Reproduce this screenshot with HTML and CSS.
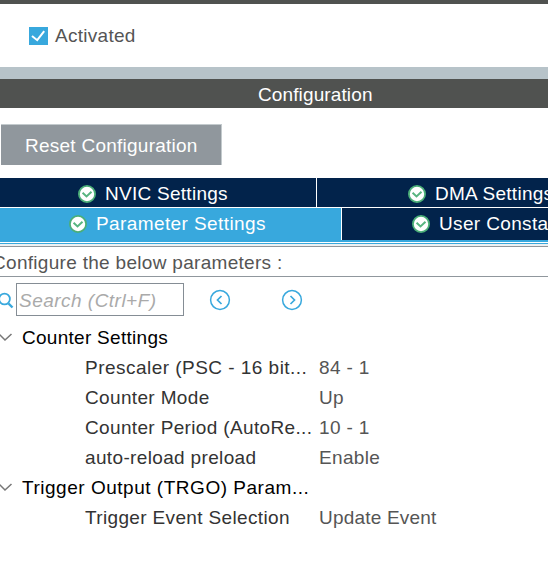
FILE: index.html
```html
<!DOCTYPE html>
<html lang="en">
<head>
<meta charset="utf-8">
<title>Timer configuration</title>
<link rel="stylesheet" href="styles.css">
</head>
<body>
<svg width="0" height="0" class="defs">
  <symbol id="ok" viewBox="0 0 18 18">
    <circle cx="9" cy="9" r="8.1" fill="#fff" stroke="#4bae78" stroke-width="1.8"/>
    <path d="M4.6 7.8l3.9 3.6 5-4.600" fill="none" stroke="#58b580" stroke-width="2"/>
  </symbol>
</svg>
<section class="mode">
  <label class="check">
    <svg width="19" height="18" viewBox="0 0 19 18"><path fill="#38a8dd" d="M0 0h19v18H0z"/><path d="M3 9l5.200 4.200 7-9" fill="none" stroke="#fff" stroke-width="2"/></svg>
    <span>Activated</span>
  </label>
</section>
<div class="sash"></div>
<h1 class="title">Configuration</h1>
<div class="actions"><button class="reset">Reset Configuration</button></div>
<nav class="tabs">
  <div class="tabrow first">
    <div class="tab nvic"><svg class="ok"><use href="#ok"/></svg><span>NVIC Settings</span></div>
    <div class="tab dma"><svg class="ok"><use href="#ok"/></svg><span>DMA Settings</span></div>
  </div>
  <div class="tabrow second">
    <div class="tab param"><svg class="ok"><use href="#ok"/></svg><span>Parameter Settings</span></div>
    <div class="tab user"><svg class="ok"><use href="#ok"/></svg><span>User Constants</span></div>
  </div>
</nav>
<div class="edge"></div>
<p class="hint">Configure the below parameters :</p>
<div class="search">
  <svg class="lens" width="16" height="20" viewBox="0 0 16 20"><circle cx="4.500" cy="9" r="5.400" fill="none" stroke="#38a8dd" stroke-width="1.8"/><path d="M8.500 13.500l4 4" stroke="#38a8dd" stroke-width="2.4"/></svg>
  <div class="field">Search (Ctrl+F)</div>
  <svg class="prev" width="22" height="22" viewBox="0 0 22 22" fill="none" stroke="#38a8dd"><circle cx="11" cy="11" r="9.400" stroke-width="1.5"/><path d="M12.500 7l-4 4 4 4" stroke-width="1.7"/></svg>
  <svg class="next" width="22" height="22" viewBox="0 0 22 22" fill="none" stroke="#38a8dd"><circle cx="11" cy="11" r="9.400" stroke-width="1.5"/><path d="M9.500 7l4 4-4 4" stroke-width="1.7"/></svg>
</div>
<div class="tree">
  <div class="group"><svg width="22" height="10" viewBox="0 0 22 10"><path d="M-1 1l6 6 6.500-6" fill="none" stroke="#777" stroke-width="1.5"/></svg><span class="t1">Counter Settings</span></div>
  <div class="row"><span class="key k1">Prescaler (PSC - 16 bit...</span><span class="val">84 - 1</span></div>
  <div class="row"><span class="key">Counter Mode</span><span class="val">Up</span></div>
  <div class="row"><span class="key">Counter Period (AutoRe...</span><span class="val">10 - 1</span></div>
  <div class="row"><span class="key">auto-reload preload</span><span class="val">Enable</span></div>
  <div class="group"><svg width="22" height="10" viewBox="0 0 22 10"><path d="M-1 1l6 6 6.500-6" fill="none" stroke="#777" stroke-width="1.5"/></svg><span class="t2">Trigger Output (TRGO) Param...</span></div>
  <div class="row"><span class="key">Trigger Event Selection</span><span class="val v5">Update Event</span></div>
</div>
</body>
</html>
```
FILE: styles.css
```css
* { box-sizing: border-box; }
body {
  margin: 0;
  height: 574px;
  overflow: hidden;
  background: #fff;
  color: #555;
  font: 19px/30px "Liberation Sans", Arial, sans-serif;
  letter-spacing: .35px;
  white-space: nowrap;
}
svg { display: block; flex: none; }
.defs { position: absolute; }
.mode { height: 67px; border-top: 4px solid #505250; padding: 17px 0 0 29px; }
.check { display: flex; align-items: center; gap: 7px; letter-spacing: .28px; }
.sash { height: 12px; background: #b7c3c9; }
.title {
  margin: 0;
  height: 29px;
  padding: 1px 0 0 258px;
  background: #505250;
  color: #fff;
  font-size: 19px;
  font-weight: 400;
  letter-spacing: .12px;
}
.actions { height: 70px; padding: 16px 0 0 1px; }
.reset {
  display: block;
  width: 221px;
  height: 41px;
  padding: 1px 0 0 24px;
  border: 0 solid #c3cacd;
  border-width: 1px 1px 0 0;
  background: #90979d;
  color: #fff;
  font: inherit;
  letter-spacing: .25px;
  text-align: left;
}
.tabs { color: #fff; background: #fff; width: 548px; overflow: hidden; }
.tabrow { display: flex; gap: 1px; }
.first { height: 30px; border-bottom: 1px solid #fff; }
.second { height: 34px; border-bottom: 2px solid #38a8dd; }
.tab { display: flex; align-items: center; background: #02234b; flex: none; }
.first .tab { padding-top: 2px; letter-spacing: .27px; }
.ok { width: 18px; height: 18px; margin-right: 9px; }
.nvic { width: 316px; padding-left: 78px; }
.dma { width: 231px; padding-left: 91px; }
.param { width: 341px; padding-left: 69px; background: #38a8dd; letter-spacing: .4px; }
.user { width: 206px; padding-left: 70px; }
.edge { height: 5px; background: linear-gradient(#fff 0 1px, #38a8dd 1px 2px, #edf1f2 2px 4px, #90979d 4px); }
.hint {
  margin: 0;
  height: 30px;
  padding-top: 1px;
  border-bottom: 1px solid #90979d;
  text-indent: -8px;
  letter-spacing: .3px;
}
.search { height: 46px; display: flex; align-items: center; }
.field {
  width: 168px;
  height: 33px;
  margin-top: -1px;
  padding: 2px 0 0 2px;
  border: 1px solid #858d95;
  color: #aaa;
  font-style: italic;
  letter-spacing: .48px;
}
.prev { margin-left: 25px; }
.next { margin-left: 50px; }
.group { height: 30px; display: flex; align-items: center; color: #000; }
.t1 { letter-spacing: .28px; }
.t2 { letter-spacing: .52px; }
.row { height: 30px; display: grid; grid-template-columns: 234px 1fr; padding-left: 85px; }
.key { color: #333; }
.k1 { letter-spacing: .47px; }
.v5 { letter-spacing: .2px; }
```
